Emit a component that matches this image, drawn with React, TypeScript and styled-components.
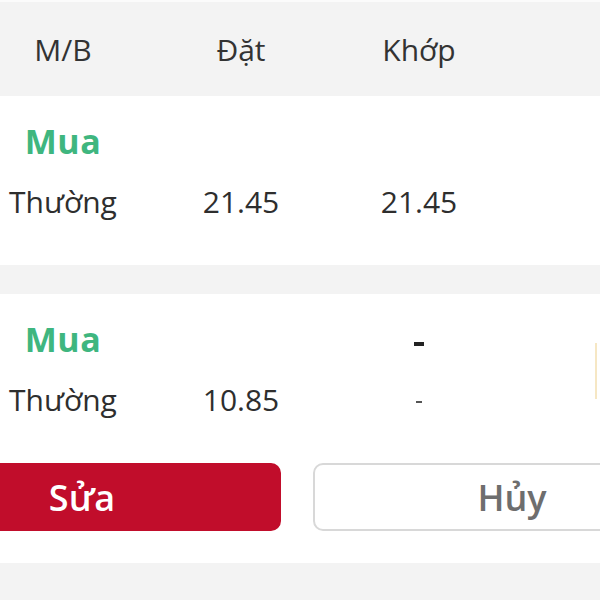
import React from 'react';
import styled, { createGlobalStyle } from 'styled-components';

const GlobalStyle = createGlobalStyle`
  html, body {
    margin: 0;
    padding: 0;
    background: #fff;
  }
  body {
    font-family: "Open Sans", "Noto Sans", sans-serif;
    color: #2e2e2e;
  }
`;

const Page = styled.div`
  width: 600px;
  height: 600px;
  overflow: hidden;
  background: #f3f3f3;
  border-top: 2px solid #fbfbfb;
  box-sizing: border-box;
`;

const Header = styled.div`
  height: 94px;
  display: flex;
  align-items: center;
  background: #f3f3f3;
`;

// the table is wider than the visible area: 4 columns of 178px, shifted left
const Cols = styled.div<{ $height?: number; $shift?: number }>`
  display: grid;
  grid-template-columns: repeat(4, 178px);
  margin-left: -26px;
  margin-top: ${p => p.$shift || 0}px;
  height: ${p => (p.$height ? `${p.$height}px` : 'auto')};
  align-items: center;
`;

const Cell = styled.div<{ $color?: string }>`
  text-align: center;
  font-size: 30px;
  line-height: 41px;
  font-weight: 400;
  color: ${p => p.$color || '#2e2e2e'};
  white-space: nowrap;
`;

const SideCell = styled(Cell)`
  font-size: 34px;
  font-weight: 700;
  letter-spacing: 0.5px;
  color: #3fb67f;
  padding-bottom: 4px;
`;

const HeadCell = styled(Cell)`
  color: #333;
`;

const Card = styled.div<{ $bottom: number }>`
  background: #fff;
  padding: 19px 0 ${p => p.$bottom}px;
  margin-bottom: 29px;
`;

const Dash = styled.span<{ $strong?: boolean }>`
  display: inline-block;
  width: ${p => (p.$strong ? 10 : 6)}px;
  height: ${p => (p.$strong ? 4 : 2)}px;
  background: ${p => (p.$strong ? '#222' : '#555')};
  vertical-align: middle;
`;

const SideMark = styled.div`
  height: 56px;
  display: flex;
  justify-content: flex-start;
  padding-left: 87px;
  span {
    width: 2px;
    height: 56px;
    margin-top: 30px;
    background: #f6e7c4;
  }
`;

const Actions = styled.div`
  display: flex;
  gap: 32px;
  width: 828px;
  margin: 36px 0 0 -117px;
`;

const Button = styled.button<{ $primary?: boolean }>`
  flex: 1;
  height: 68px;
  border-radius: 10px;
  font-family: "Open Sans", "Noto Sans", sans-serif;
  font-size: 36px;
  font-weight: 600;
  cursor: pointer;
  background: ${p => (p.$primary ? '#c10d2b' : '#fff')};
  color: ${p => (p.$primary ? '#fff' : '#6e6e6e')};
  border: 2px solid ${p => (p.$primary ? '#c10d2b' : '#d8d8d8')};
  box-sizing: border-box;
`;

const App = () => {
  return (
    <Page>
      <GlobalStyle />
      <Header>
        <Cols>
          <HeadCell>M/B</HeadCell>
          <HeadCell>Đặt</HeadCell>
          <HeadCell>Khớp</HeadCell>
          <HeadCell />
        </Cols>
      </Header>

      <Card $bottom={36}>
        <Cols $height={56}>
          <SideCell>Mua</SideCell>
          <Cell />
          <Cell />
          <Cell />
        </Cols>
        <Cols $height={56} $shift={2}>
          <Cell>Thường</Cell>
          <Cell>21.45</Cell>
          <Cell>21.45</Cell>
          <Cell />
        </Cols>
      </Card>

      <Card $bottom={32}>
        <Cols $height={56}>
          <SideCell>Mua</SideCell>
          <Cell />
          <Cell><Dash $strong /></Cell>
          <SideMark><span /></SideMark>
        </Cols>
        <Cols $height={56} $shift={2}>
          <Cell>Thường</Cell>
          <Cell>10.85</Cell>
          <Cell><Dash /></Cell>
          <Cell />
        </Cols>
        <Actions>
          <Button $primary>Sửa</Button>
          <Button>Hủy</Button>
        </Actions>
      </Card>
    </Page>
  );
};

export default App;
